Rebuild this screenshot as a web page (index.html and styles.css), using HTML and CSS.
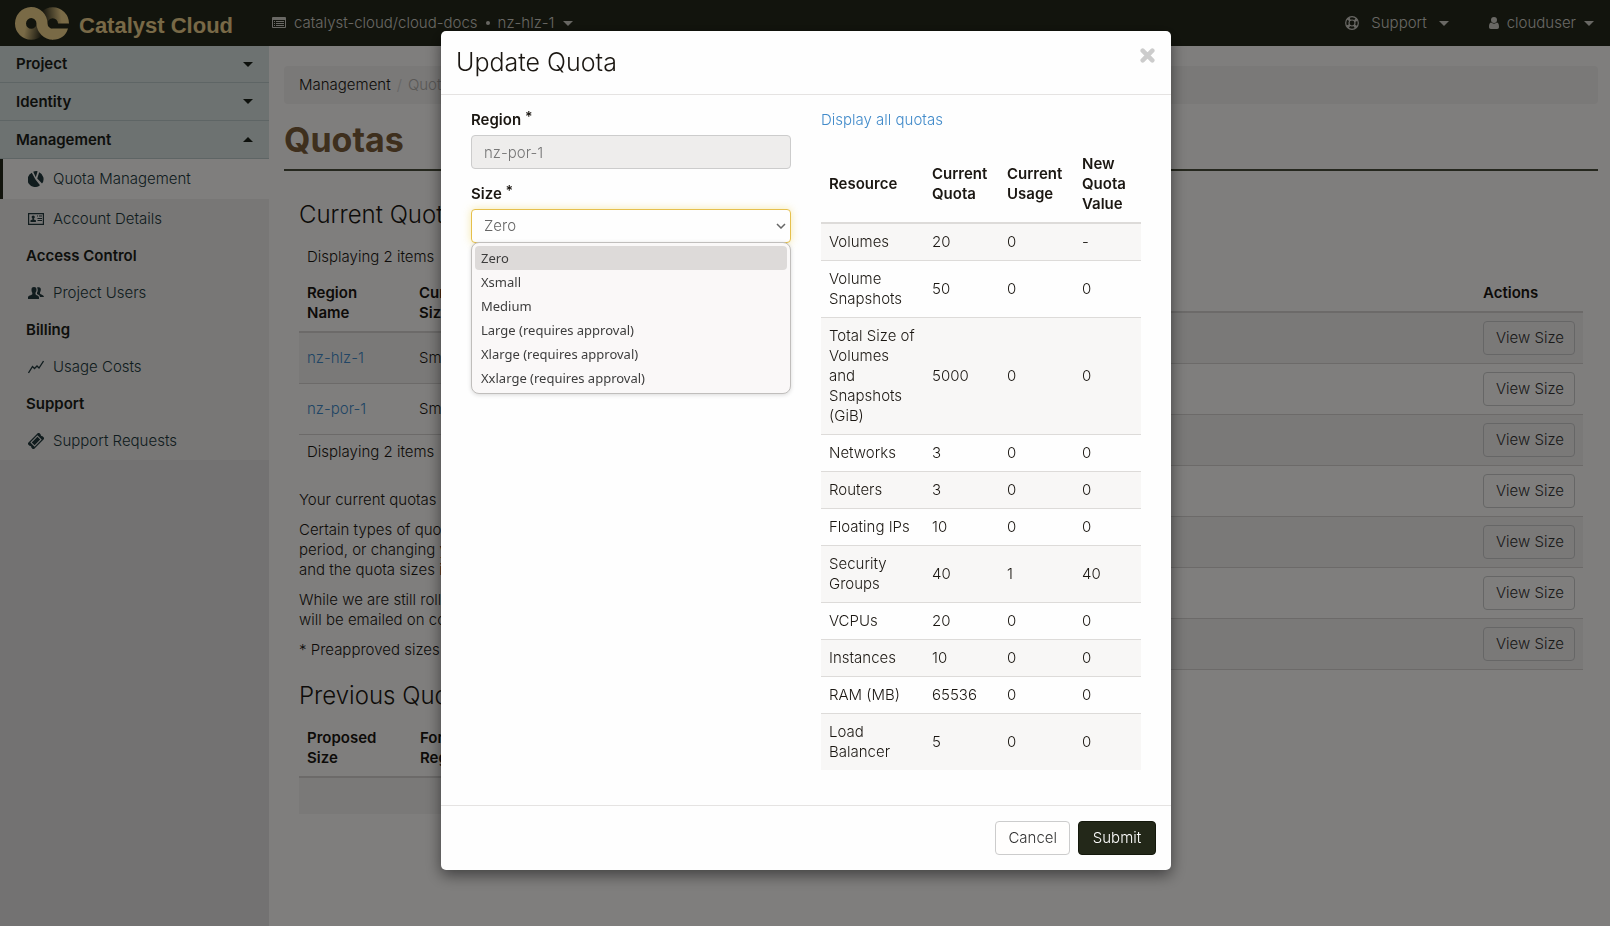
FILE: index.html
```
<!DOCTYPE html>
<html lang="en">
<head>
<meta charset="utf-8">
<title>Quotas - Catalyst Cloud</title>
<link rel="stylesheet" href="styles.css">
</head>
<body>
<header class="navbar">
  <a class="brand" href="#">
    <svg class="brand-mark" viewBox="0 0 54 33" aria-hidden="true">
      <defs>
        <linearGradient id="fadeLow" gradientUnits="userSpaceOnUse" x1="6" y1="20" x2="27" y2="24"><stop offset="0.2" stop-color="#f2d48c"/><stop offset="1" stop-color="#2e2d1e"/></linearGradient>
        <linearGradient id="fadeHigh" gradientUnits="userSpaceOnUse" x1="28" y1="10" x2="46" y2="8"><stop offset="0" stop-color="#2e2d1e"/><stop offset="1" stop-color="#f2d48c"/></linearGradient>
      </defs>
      <g fill="none" stroke-width="11">
        <path d="M5.500 16.500a10.750 10.750 0 0 0 21.500 0" stroke="url(#fadeLow)"/>
        <path d="M27 16.500a10.750 10.750 0 0 1 21.500 0" stroke="url(#fadeHigh)"/>
        <path d="M5.500 17a10.750 11.250 0 0 1 21.500 -.5a11 11 0 0 0 11 10.800" stroke="#f2d48c"/>
      </g>
      <path d="M37.500 21.500H53C51 28.500 45.500 32.800 37.500 32.800z" fill="#f2d48c"/>
    </svg>
    <span>Catalyst Cloud</span>
  </a>
  <button class="nav-item" type="button">
    <svg class="ico" viewBox="0 0 14 12" aria-hidden="true"><path fill-rule="evenodd" d="M1 0h12a1 1 0 0 1 1 1v9a1 1 0 0 1-1 1H1a1 1 0 0 1-1-1V1a1 1 0 0 1 1-1zM1 3v7h12V3zM2 4h1v1H2zM4 4h8v1H4zM2 6h1v1H2zM4 6h8v1H4zM2 8h1v1H2zM4 8h8v1H4z" fill="currentColor"/></svg>
    <span>catalyst-cloud/cloud-docs</span><span class="dot"></span><span>nz-hlz-1</span><span class="caret"></span>
  </button>
  <div class="nav-right">
    <button class="nav-item nav-support" type="button">
      <svg class="ico" viewBox="0 0 14 14" aria-hidden="true"><g fill="none" stroke="currentColor"><circle cx="7" cy="7" r="6.300" stroke-width="1.200"/><circle cx="7" cy="7" r="3" stroke-width="1.200"/><circle cx="7" cy="7" r="4.600" stroke-width="3" stroke-dasharray="2.400 4.826" stroke-dashoffset="-2.400"/></g></svg>
      <span>Support</span><span class="caret"></span>
    </button>
    <button class="nav-item" type="button">
      <svg class="ico-user" viewBox="0 0 10 12" aria-hidden="true"><circle cx="5" cy="3" r="3" fill="currentColor"/><path d="M2 5.500c2 1.500 4 1.500 6 0c1.500.5 2 2 2 4.500c0 1.300-.7 2-1.800 2H1.800C.7 12 0 11.300 0 10c0-2.500.5-4 2-4.500z" fill="currentColor"/></svg>
      <span>clouduser</span><span class="caret"></span>
    </button>
  </div>
</header>

<div class="layout">
  <nav class="sidebar">
    <button class="panel" type="button">Project<span class="caret"></span></button>
    <button class="panel" type="button">Identity<span class="caret"></span></button>
    <button class="panel" type="button">Management<span class="caret up"></span></button>
    <div class="group">
      <a class="link top active" href="#"><svg viewBox="0 0 16 16" aria-hidden="true"><path d="M7.300 8.200L3.800 1.800A7.500 7.500 0 1 0 12 14.200zM9.200 7.600L14 12.600A7.500 7.500 0 0 0 11.200 1.200zM7.800 6.200L9.600 .2A8 8 0 0 0 5.200 .7z" fill="currentColor"/></svg>Quota Management</a>
      <a class="link top" href="#"><svg viewBox="0 0 16 16" aria-hidden="true"><path d="M.6 2.600h14.800v10.800H.6z" fill="none" stroke="currentColor" stroke-width="1.200"/><circle cx="5.200" cy="6" r="1.600" fill="currentColor"/><path d="M4.500 7h1.400v1.500l2 .8V11H2.500V9.300l2-.8zM9 4.500h1v1H9zM11 4.500h3v1h-3zM9.500 7H14v1H9.500zM9.500 9H14v1H9.500z" fill="currentColor"/></svg>Account Details</a>
      <h4>Access Control</h4>
      <a class="link" href="#"><svg viewBox="0 0 16 16" aria-hidden="true"><path d="M6 2c2 0 2.600 1.200 2.500 3c0 1.300-.7 2.200-1 2.900v1.300c.5 1 3.500 1.300 3.500 3V14H0v-1.800c0-1.700 3.500-2 4.300-3V7.900C4 7.200 3.500 6.300 3.500 5C3.400 3.200 4 2 6 2zM9 2.600C12 1.400 13.200 3 12.800 5.200c-.1 1-.6 1.600-.8 2.200v1C12.500 9.500 16 10 16 12h-4c-.2-2-1.800-2.300-3-3V7.800c1-1.600 1-3.800 0-5.200z" fill="currentColor"/></svg>Project Users</a>
      <h4>Billing</h4>
      <a class="link" href="#"><svg viewBox="0 0 16 16" aria-hidden="true"><path d="M.5 14L4.500 7.500L6.500 9.500L9 7L11 9L15.500 2" fill="none" stroke="currentColor" stroke-width="1.300"/></svg>Usage Costs</a>
      <h4>Support</h4>
      <a class="link" href="#"><svg viewBox="0 0 16 16" aria-hidden="true"><g transform="rotate(-45 8 8)"><path fill-rule="evenodd" d="M0 3.700h16v3a1.500 1.500 0 0 0 0 2.600v3H0v-3a1.500 1.500 0 0 0 0-2.600zM3 5v6h10V5zM4 6h8v4H4z" fill="currentColor"/></g></svg>Support Requests</a>
    </div>
  </nav>

  <main class="content">
    <ol class="breadcrumb"><li>Management</li><li class="current">Quotas</li></ol>
    <h1>Quotas</h1>
    <div class="columns">
      <section class="col-left">
        <h3>Current Quota Sizes</h3>
        <p class="count">Displaying 2 items</p>
        <table class="grid regions">
          <thead><tr><th>Region<br>Name</th><th>Current<br>Size</th></tr></thead>
          <tbody>
            <tr><td><a href="#">nz-hlz-1</a></td><td>Small</td></tr>
            <tr><td><a href="#">nz-por-1</a></td><td>Small</td></tr>
          </tbody>
        </table>
        <p class="count foot">Displaying 2 items</p>
        <p>Your current quotas</p>
        <p>Certain types of quota<br>period, or changing your<br>and the quota sizes in</p>
        <p>While we are still rolling<br>will be emailed on com</p>
        <p>* Preapproved sizes do</p>
        <h3 class="second">Previous Quota</h3>
        <table class="grid changes">
          <thead><tr><th>Proposed<br>Size</th><th>For<br>Region</th></tr></thead>
          <tbody><tr><td></td><td></td></tr></tbody>
        </table>
      </section>
      <section class="col-right">
        <table class="grid sizes">
          <thead><tr><th></th><th class="act">Actions</th></tr></thead>
          <tbody>
            <tr><td></td><td><button class="btn" type="button">View Size</button></td></tr>
            <tr><td></td><td><button class="btn" type="button">View Size</button></td></tr>
            <tr><td></td><td><button class="btn" type="button">View Size</button></td></tr>
            <tr><td></td><td><button class="btn" type="button">View Size</button></td></tr>
            <tr><td></td><td><button class="btn" type="button">View Size</button></td></tr>
            <tr><td></td><td><button class="btn" type="button">View Size</button></td></tr>
            <tr><td></td><td><button class="btn" type="button">View Size</button></td></tr>
          </tbody>
        </table>
      </section>
    </div>
  </main>
</div>

<div class="backdrop">
  <form class="modal" role="dialog" aria-labelledby="modal-title">
    <div class="modal-header">
      <h2 id="modal-title">Update Quota</h2>
      <button class="close" type="button" aria-label="Close"><svg viewBox="0 0 14 14" aria-hidden="true"><path d="M2.500 2.500l9 9M11.500 2.500l-9 9" stroke="currentColor" stroke-width="4.200" stroke-linecap="round"/></svg></button>
    </div>
    <div class="modal-body">
      <div class="fields">
        <div class="field">
          <label for="region">Region <span class="req">*</span></label>
          <input id="region" class="control" type="text" value="nz-por-1" disabled>
        </div>
        <div class="field">
          <label for="size">Size <span class="req">*</span></label>
          <div class="select-wrap">
            <select id="size" class="control focus"><option>Zero</option></select>
            <svg class="chevron" viewBox="0 0 10 6" aria-hidden="true"><path d="M1 1l4 4l4-4" fill="none" stroke="currentColor" stroke-width="1.500"/></svg>
            <ul class="menu" role="listbox" aria-label="Size options">
              <li role="option" aria-selected="true">Zero</li>
              <li role="option">Xsmall</li>
              <li role="option">Medium</li>
              <li role="option">Large (requires approval)</li>
              <li role="option">Xlarge (requires approval)</li>
              <li role="option">Xxlarge (requires approval)</li>
            </ul>
          </div>
        </div>
      </div>
      <div class="quotas">
        <a href="#">Display all quotas</a>
        <table class="grid resources">
          <thead><tr><th class="c-res">Resource</th><th class="c-num">Current Quota</th><th class="c-num">Current Usage</th><th>New Quota Value</th></tr></thead>
          <tbody>
            <tr><td>Volumes</td><td>20</td><td>0</td><td>-</td></tr>
            <tr><td>Volume Snapshots</td><td>50</td><td>0</td><td>0</td></tr>
            <tr><td>Total Size of Volumes and Snapshots (GiB)</td><td>5000</td><td>0</td><td>0</td></tr>
            <tr><td>Networks</td><td>3</td><td>0</td><td>0</td></tr>
            <tr><td>Routers</td><td>3</td><td>0</td><td>0</td></tr>
            <tr><td>Floating IPs</td><td>10</td><td>0</td><td>0</td></tr>
            <tr><td>Security Groups</td><td>40</td><td>1</td><td>40</td></tr>
            <tr><td>VCPUs</td><td>20</td><td>0</td><td>0</td></tr>
            <tr><td>Instances</td><td>10</td><td>0</td><td>0</td></tr>
            <tr><td>RAM (MB)</td><td>65536</td><td>0</td><td>0</td></tr>
            <tr><td>Load Balancer</td><td>5</td><td>0</td><td>0</td></tr>
          </tbody>
        </table>
      </div>
    </div>
    <div class="modal-footer">
      <button class="btn" type="button">Cancel</button>
      <button class="btn primary" type="submit">Submit</button>
    </div>
  </form>
</div>
</body>
</html>
```

FILE: styles.css
```
* { box-sizing: border-box; }

body {
  margin: 0;
  min-height: 100vh;
  display: flex;
  flex-direction: column;
  overflow: hidden;
  background: #fffdfb;
  color: #1b1712;
  font: 300 15px/20px Inter, "Liberation Sans", sans-serif;
}

button, input, select { font: inherit; color: inherit; }
a { color: #428bca; text-decoration: none; }
h1, h2, h3, h4, p, ul, ol { margin: 0; padding: 0; font-weight: inherit; }
ul, ol { list-style: none; }

.caret {
  width: 0;
  height: 0;
  border: 5px solid transparent;
  border-top-color: currentColor;
  border-bottom-width: 0;
}
.caret.up {
  border-top-width: 0;
  border-bottom: 5px solid currentColor;
}

/* top bar */
.navbar {
  display: flex;
  align-items: center;
  height: 46px;
  padding: 0 16px 0 15px;
  background: #25291b;
  color: #d2d0c8;
}
.brand {
  display: flex;
  align-items: center;
  gap: 10px;
  margin-right: 39px;
  color: #f0d28e;
  font: bold 22px/30px "Liberation Sans", sans-serif;
}
.brand span { padding-top: 6px; }
.brand-mark { width: 54px; height: 33px; }
.nav-item {
  display: flex;
  align-items: center;
  gap: 8px;
  padding: 0;
  border: 0;
  background: none;
}
.ico { width: 14px; }
.ico-user { width: 10px; }
.dot { width: 4px; height: 4px; border-radius: 50%; background: currentColor; }
.nav-right { display: flex; gap: 40px; margin-left: auto; }
.nav-support { gap: 12px; }

/* sidebar */
.layout { display: flex; flex: 1; }
.sidebar { width: 269px; flex: none; background: #e6e5e4; }
.panel {
  display: flex;
  align-items: center;
  justify-content: space-between;
  width: 100%;
  height: 38px;
  padding: 0 16px;
  border: 0;
  border-bottom: 1px solid #bccaca;
  background: #dbe4e2;
  color: #1b2018;
  font-weight: 600;
}
.panel:first-child { height: 37px; }
.group { background: #f0eeec; }
.group h4 { padding: 8px 26px; font-weight: 600; color: #1b2018; }
.link {
  display: flex;
  align-items: center;
  gap: 9px;
  height: 38px;
  padding-left: 28px;
  color: #22393d;
}
.link svg { width: 16px; height: 16px; }
.link.top { height: 39px; }
.link.active { height: 40px; border-left: 3px solid #25291b; padding-left: 25px; background: #fffdfb; }

/* page */
.content { flex: 1; padding: 20px 12px 0 15px; }
.breadcrumb { display: flex; padding: 9px 15px; border-radius: 4px; background: #f4f2f0; }
.breadcrumb .current { color: #b3b0ad; }
.breadcrumb .current::before { content: "/"; padding: 0 6px; color: #ccc; }
h1 {
  margin-top: 12px;
  padding: 4px 0 9px;
  border-bottom: 2px solid #4a4f3c;
  color: #7c5e3a;
  font-size: 34px;
  line-height: 40px;
  font-weight: 700;
}
.columns { display: flex; gap: 30px; padding: 0 15px; }
.col-left, .col-right { flex: 1; }
h3 { padding: 29px 0 14px; font-size: 24px; line-height: 30px; }
h3.second { padding: 11px 0 9px; }
.col-left p { margin-bottom: 10px; }
.col-left .count { margin: 0; padding: 3px 8px 8px; }
.col-left .foot { padding: 7px 8px 28px; }

.grid { width: 100%; border-collapse: separate; border-spacing: 0; table-layout: fixed; }
.grid th { padding: 8px; border-bottom: 2px solid #dddbd9; text-align: left; font-weight: 600; }
.grid td { padding: 8px; border-bottom: 1px solid #dddbd9; }
.grid tbody tr:nth-child(odd) { background: #f8f7f6; }
.content .grid tbody tr:nth-child(odd) { background: #f5f3f1; }
.content .grid th, .content .grid td { border-color: #d8d5d3; }
.regions td { height: 51px; }
.regions th:first-child { width: 112px; }
.changes th:first-child { width: 113px; }
.changes td { height: 36px; border: 0; }
.sizes { margin-top: 104px; }
.sizes .act { width: 108px; }

.btn {
  height: 34px;
  padding: 0 12px;
  border: 1px solid #ccc;
  border-radius: 4px;
  background: #fffefd;
  color: #333;
  white-space: nowrap;
}
.sizes .btn { display: block; width: 100%; background: none; }
.btn.primary { min-width: 78px; border-color: #14180c; background: #232819; color: #fff; }

/* dialog */
.backdrop {
  position: fixed;
  inset: 0;
  display: flex;
  align-items: flex-start;
  justify-content: center;
  padding: 31px 0 0 2px;
  background: rgba(0, 0, 0, .5);
}
.modal {
  width: 730px;
  border-radius: 5px;
  background: #fefefe;
  box-shadow: 0 5px 15px rgba(0, 0, 0, .5);
}
.modal-header {
  display: flex;
  align-items: flex-start;
  justify-content: space-between;
  padding: 15px 15px 16px;
  border-bottom: 1px solid #e5e3e2;
}
.modal-header h2 { font-size: 25px; line-height: 32px; }
.close { padding: 2px 1px; border: 0; background: none; color: #ccc; line-height: 0; }
.close svg { width: 15px; height: 15px; }
.modal-body { display: grid; grid-template-columns: 1fr 1fr; gap: 30px; padding: 15px 30px 35px; }
.field { margin-bottom: 15px; }
.field label { display: block; padding-bottom: 5px; font-weight: 600; }
.req { font-size: 14px; line-height: 10px; vertical-align: 3px; }
.control {
  display: block;
  width: 100%;
  height: 34px;
  padding: 0 12px;
  border: 1px solid #ccc;
  border-radius: 4px;
  background: #fefefe;
  color: #666;
  appearance: none;
}
.control:disabled { background: #eeedec; color: #777; }
.control.focus { border-color: #e6c04c; box-shadow: 0 0 8px rgba(240, 220, 120, .6); }
.select-wrap { position: relative; }
.chevron { position: absolute; right: 5px; top: 14px; width: 10px; color: #666; }
.menu {
  position: absolute;
  top: 33px;
  left: 0;
  right: 0;
  padding: 3px;
  border: 1px solid #c0bebc;
  border-radius: 8px;
  background: #faf8f8;
  box-shadow: 0 1px 4px rgba(0, 0, 0, .15);
  color: #3d3d3d;
  font: 13px/24px "Noto Sans", "Open Sans", sans-serif;
}
.menu li { padding: 0 6px; border-radius: 4px; }
.menu li[aria-selected="true"] { background: #dddad9; }
.resources { margin-top: 16px; }
.resources .c-res { width: 103px; }
.resources .c-num { width: 75px; }
.resources tr:last-child td { border-bottom: 0; }
.modal-footer {
  display: flex;
  justify-content: flex-end;
  gap: 8px;
  padding: 15px;
  border-top: 1px solid #e5e3e2;
}
```
